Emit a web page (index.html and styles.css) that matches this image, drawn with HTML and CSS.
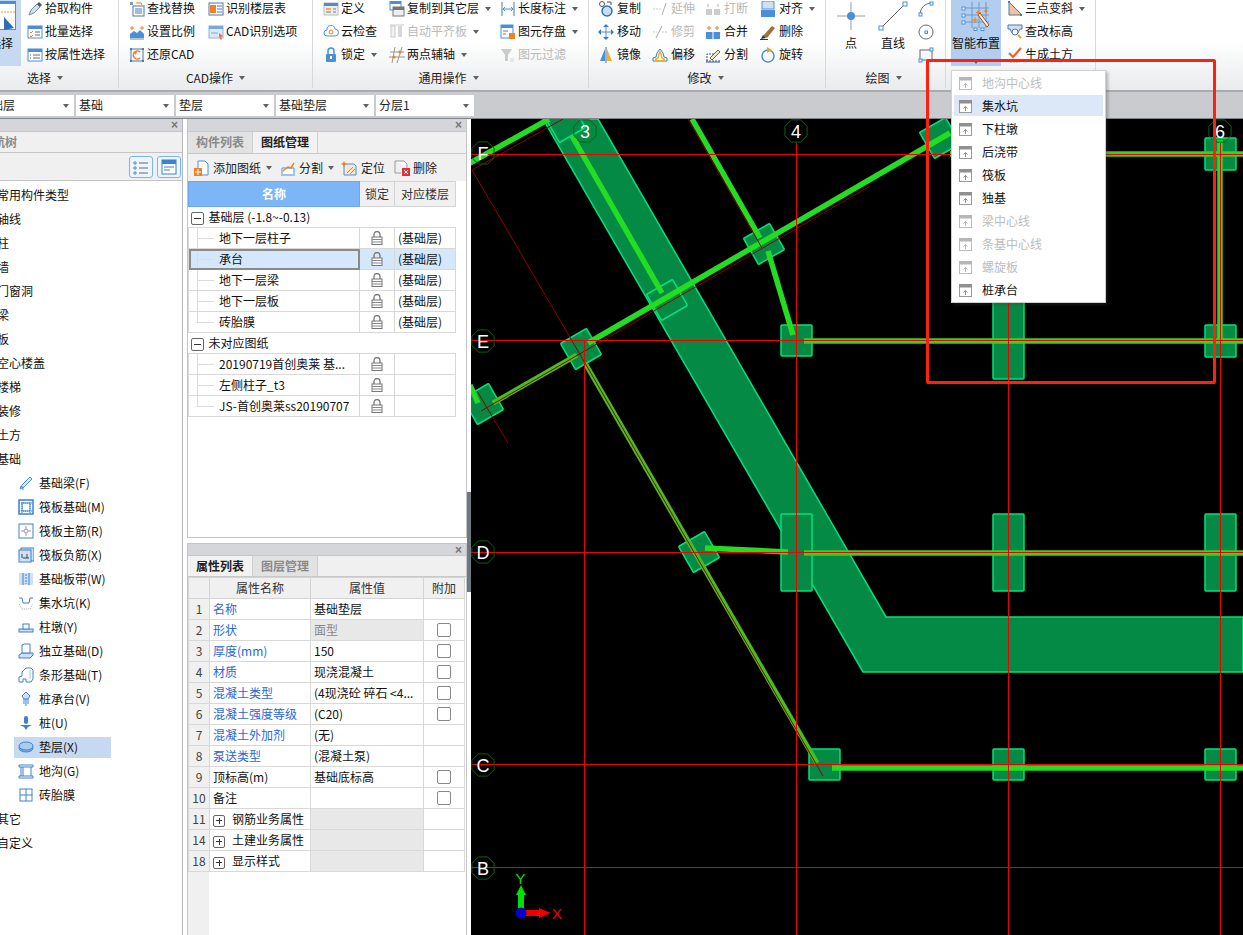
FILE: index.html
```html
<!DOCTYPE html>
<html lang="zh">
<head>
<meta charset="utf-8">
<title>基础垫层</title>
<link rel="stylesheet" href="styles.css">
</head>
<body>
<svg class="defs" width="0" height="0" aria-hidden="true">
<defs>
<symbol id="pick" viewBox="0 0 16 16"><path d="M2 14l2-5 6-6 3 3-6 6z" fill="#cfe0f2" stroke="#7c8da0"/><path d="M10 3l2-2 3 3-2 2z" fill="#555"/></symbol>
<symbol id="batch" viewBox="0 0 16 16"><rect x="1" y="2" width="14" height="12" fill="#fff" stroke="#4a90d9"/><rect x="1" y="2" width="14" height="3" fill="#4a90d9"/><path d="M3 8l1 1 2-2M3 12l1 1 2-2" stroke="#f08020" fill="none"/><path d="M8 8h5M8 11h5" stroke="#667"/></symbol>
<symbol id="attr" viewBox="0 0 16 16"><rect x="1" y="2" width="14" height="12" fill="#fff" stroke="#4a90d9"/><rect x="1" y="2" width="14" height="3" fill="#4a90d9"/><path d="M3 8h1M3 11h1M6 8h7M6 11h7" stroke="#667"/></symbol>
<symbol id="find" viewBox="0 0 16 16"><rect x="4" y="5" width="11" height="10" fill="#fff" stroke="#4a78b0"/><path d="M6 8h7M6 10h7M6 12h7" stroke="#4a78b0"/><path d="M1 1h3v3H1z" fill="#89a"/><path d="M7 2h5l1 2" fill="none" stroke="#f08020"/></symbol>
<symbol id="scale" viewBox="0 0 16 16"><path d="M1 14V10l4-3 3 2 3-3 4 4v4z" fill="#4a90d9"/><path d="M1 4h4M11 4h4" stroke="#f08020"/><path d="M3 2v4M13 2v4" stroke="#f08020"/><path d="M1 15h14" stroke="#789"/></symbol>
<symbol id="restore" viewBox="0 0 16 16"><rect x="2" y="2" width="12" height="12" fill="none" stroke="#4a78b0"/><path d="M1 1h2v2H1zM13 1h2v2h-2zM1 13h2v2H1zM13 13h2v2h-2z" fill="#4a78b0"/><path d="M11 5a4 4 0 1 0 0 6" fill="none" stroke="#f08020" stroke-width="1.5"/><path d="M4 5l4-1-1 4z" fill="#f08020"/></symbol>
<symbol id="floor" viewBox="0 0 16 16"><rect x="1" y="2" width="14" height="12" fill="#fff" stroke="#4a78b0"/><rect x="2" y="4" width="6" height="8" fill="#f08020"/><path d="M9 5h5M9 8h5M9 11h5" stroke="#4a78b0"/></symbol>
<symbol id="cadopt" viewBox="0 0 16 16"><rect x="1" y="2" width="14" height="12" fill="#dbe8f6" stroke="#8db4de"/><rect x="1" y="2" width="14" height="3" fill="#7aa8dc"/><path d="M3 9h7" stroke="#7aa8dc"/><path d="M11 9l4 3-2 1 1 2-1 1-2-3z" fill="#f07050"/></symbol>
<symbol id="def" viewBox="0 0 16 16"><rect x="1" y="2" width="14" height="12" fill="#eee" stroke="#bbb"/><rect x="1" y="2" width="14" height="3" fill="#4a90d9"/><rect x="3" y="7" width="5" height="2" fill="#f0b040"/><path d="M10 8h3M3 11h5M10 11h3" stroke="#777"/></symbol>
<symbol id="cloud" viewBox="0 0 16 16"><path d="M4 12a3 3 0 0 1 0-6 4 4 0 0 1 8-1 3.500 3.500 0 0 1 0 7z" fill="#fff" stroke="#4a90d9"/><circle cx="8" cy="8" r="2" fill="none" stroke="#f08020"/></symbol>
<symbol id="lockb" viewBox="0 0 16 16"><rect x="3" y="7" width="10" height="8" rx="1" fill="#4a90d9"/><path d="M5 7V4a3 3 0 0 1 6 0v3" fill="none" stroke="#4a90d9" stroke-width="1.500"/><rect x="7" y="9" width="2" height="3" fill="#fff"/></symbol>
<symbol id="copylayer" viewBox="0 0 16 16"><rect x="1" y="0" width="11" height="9" fill="#fff" stroke="#4a90d9"/><rect x="1" y="0" width="11" height="3" fill="#4a90d9"/><rect x="4" y="6" width="11" height="9" fill="#eee" stroke="#777"/><rect x="4" y="6" width="11" height="3" fill="#777"/></symbol>
<symbol id="align" viewBox="0 0 16 16"><path d="M1 1h14" stroke="#bbb"/><rect x="2" y="2" width="4" height="11" fill="#eee" stroke="#bbb"/><rect x="9" y="2" width="4" height="11" fill="#ccc"/></symbol>
<symbol id="axis2" viewBox="0 0 16 16"><path d="M0 10h16M1 5h14M6 0L3 16M13 0L8 16" stroke="#999" fill="none"/><circle cx="5" cy="10" r="1.500" fill="#f08020"/><circle cx="11" cy="5" r="1.500" fill="#f08020"/></symbol>
<symbol id="length" viewBox="0 0 16 16"><path d="M2 1v14M14 1v14" stroke="#4a78b0"/><path d="M3 8h10M5 6L3 8l2 2M11 6l2 2-2 2" stroke="#4a90d9" fill="none"/></symbol>
<symbol id="save" viewBox="0 0 16 16"><rect x="1" y="1" width="12" height="13" fill="#fff" stroke="#4a90d9"/><rect x="1" y="1" width="12" height="3" fill="#4a90d9"/><path d="M3 7h5M3 10h3" stroke="#778"/><rect x="9" y="9" width="6" height="6" fill="#f08020"/></symbol>
<symbol id="filter" viewBox="0 0 16 16"><path d="M1 2h11L8 8v6H5V8z" fill="#bbb"/><path d="M10 12h4M10 14h4" stroke="#ccc"/></symbol>
<symbol id="copy" viewBox="0 0 16 16"><circle cx="4" cy="3" r="2.500" fill="none" stroke="#555"/><circle cx="9" cy="10" r="5" fill="#cde" stroke="#2a70c0" stroke-width="1.500"/><path d="M9 1h4v3" fill="none" stroke="#555"/></symbol>
<symbol id="extend" viewBox="0 0 16 16"><path d="M1 8h8" stroke="#bbb" stroke-dasharray="2 1"/><path d="M10 14L14 2" stroke="#999"/></symbol>
<symbol id="break" viewBox="0 0 16 16"><rect x="1" y="8" width="6" height="6" fill="#bbb"/><rect x="9" y="8" width="6" height="6" fill="#bbb"/><path d="M3 3v3M13 3v3" stroke="#ccc" stroke-width="2"/></symbol>
<symbol id="alignr" viewBox="0 0 16 16"><rect x="2" y="0" width="12" height="8" fill="#cfe0f5" stroke="#4a90d9"/><rect x="1" y="9" width="14" height="7" fill="#4a90d9"/></symbol>
<symbol id="move" viewBox="0 0 16 16"><path d="M8 2v12M2 8h12" stroke="#4a90d9"/><path d="M8 0l3 3H5zM8 16l3-3H5zM0 8l3-3v6zM16 8l-3-3v6z" fill="#2a80d0"/></symbol>
<symbol id="trim" viewBox="0 0 16 16"><path d="M1 8h4M10 8h5" stroke="#bbb" stroke-dasharray="2 1"/><path d="M4 14L10 2" stroke="#888"/></symbol>
<symbol id="merge" viewBox="0 0 16 16"><rect x="1" y="8" width="14" height="7" fill="#4a90d9"/><path d="M8 8v7" stroke="#fff"/><path d="M4 2v4M12 2v4M2 4h4M10 4h4" stroke="#f08020" stroke-width="1"/></symbol>
<symbol id="erase" viewBox="0 0 16 16"><path d="M3 12L12 2l3 2-8 10z" fill="#a0703a"/><path d="M1 15l2-4 3 3z" fill="#333"/><path d="M0 15.500h8" stroke="#333"/></symbol>
<symbol id="mirror" viewBox="0 0 16 16"><path d="M7 2v12H2z" fill="#4a90d9"/><path d="M9 2v12h5z" fill="#f0b020"/><path d="M8 0v16" stroke="#667"/></symbol>
<symbol id="offset" viewBox="0 0 16 16"><path d="M1 14v-3l3-1 1-4 3-4 3 4 1 4 3 1v3z" fill="#fff" stroke="#2a80d0"/><path d="M4 14v-2l2-1 1-4 1-2 1 2 1 4 2 1v2z" fill="none" stroke="#f0b020" stroke-width="1.500"/></symbol>
<symbol id="split" viewBox="0 0 16 16"><path d="M1 14h14M2 14L2 7h7" stroke="#3a5a90" fill="none" stroke-dasharray="2 1"/><path d="M5 11l8-8 2 2-8 8z" fill="#f4e8c0" stroke="#665"/><path d="M1 15h14" stroke="#3a5a90"/></symbol>
<symbol id="rotate" viewBox="0 0 16 16"><circle cx="8" cy="9" r="6" fill="none" stroke="#4a90d9" stroke-width="1.500"/><path d="M7 0l5 3-5 3z" fill="#f0a020"/></symbol>
<symbol id="slope" viewBox="0 0 16 16"><path d="M2 1v13h13z" fill="#f4c0a0" stroke="#4a78b0"/><rect x="1" y="0" width="2" height="2" fill="#4a78b0"/><rect x="13" y="13" width="2" height="2" fill="#4a78b0"/></symbol>
<symbol id="elev" viewBox="0 0 16 16"><path d="M1 1h14v4h-2l-2 4H5L3 5H1z" fill="#cfe0f5" stroke="#4a78b0"/><circle cx="8" cy="8" r="3" fill="#fff" stroke="#4a78b0"/><path d="M11 11l3 3" stroke="#f0a020" stroke-width="2"/></symbol>
<symbol id="earth" viewBox="0 0 16 16"><path d="M2 6l4 4 8-9" fill="none" stroke="#f06020" stroke-width="2"/><path d="M2 13h12M3 15h10" stroke="#99a" stroke-dasharray="2 1"/></symbol>
<symbol id="arc" viewBox="0 0 16 16"><path d="M2 14C2 7 7 2 14 2" fill="none" stroke="#667"/><rect x="1" y="12" width="3" height="3" fill="#fff" stroke="#4a90d9"/><rect x="12" y="1" width="3" height="3" fill="#fff" stroke="#4a90d9"/></symbol>
<symbol id="circ" viewBox="0 0 16 16"><circle cx="8" cy="8" r="7" fill="none" stroke="#667"/><rect x="7" y="7" width="2.500" height="2.500" fill="#fff" stroke="#4a90d9"/></symbol>
<symbol id="rectc" viewBox="0 0 16 16"><rect x="2" y="3" width="12" height="10" fill="none" stroke="#667"/><rect x="1" y="12" width="3" height="3" fill="#fff" stroke="#4a90d9"/><rect x="12" y="1" width="3" height="3" fill="#fff" stroke="#4a90d9"/></symbol>
<symbol id="bigpoint" viewBox="0 0 30 30"><path d="M15 1v28M1 15h28" stroke="#9aa0a6"/><circle cx="15" cy="15" r="4" fill="#4a90d9"/></symbol>
<symbol id="bigline" viewBox="0 0 30 30"><path d="M3 27L27 3" stroke="#666"/><rect x="1" y="25" width="4" height="4" fill="#fff" stroke="#4a90d9"/><rect x="25" y="1" width="4" height="4" fill="#fff" stroke="#4a90d9"/></symbol>
<symbol id="smart" viewBox="0 0 30 30"><path d="M4 7h24M4 14h24M4 21h24M11 1v26M18 1v26M25 1v26" stroke="#6a9ad0"/><rect x="1" y="6" width="3" height="3" fill="#fff" stroke="#4a90d9"/><rect x="1" y="13" width="3" height="3" fill="#fff" stroke="#4a90d9"/><rect x="1" y="20" width="3" height="3" fill="#fff" stroke="#4a90d9"/><rect x="13" y="27" width="3" height="2.500" fill="#fff" stroke="#4a90d9"/><rect x="20" y="27" width="3" height="2.500" fill="#fff" stroke="#4a90d9"/><path d="M17 14l9 12 2-2-9-12z" fill="#f4f0e0" stroke="#a05030"/><path d="M11 19h6M14 16v6M17 9v5M15 11.500h5M23 10h4M25 8v4" stroke="#f08020"/></symbol>
<symbol id="tbeam" viewBox="0 0 16 16"><path d="M2 14l2-4 8-8 2 2-8 8zM2 12h3v3" fill="#d6e6f7" stroke="#4a90d9"/></symbol>
<symbol id="traft" viewBox="0 0 16 16"><rect x="1" y="1" width="14" height="14" fill="#fff" stroke="#3a82d0" stroke-width="1.500"/><rect x="4" y="4" width="8" height="8" fill="#fff" stroke="#3a82d0"/><path d="M1 4h14M1 12h14M4 1v14M12 1v14" stroke="#3a82d0" stroke-dasharray="1 1"/></symbol>
<symbol id="tmain" viewBox="0 0 16 16"><rect x="1" y="1" width="14" height="14" fill="#fff" stroke="#3a82d0"/><path d="M3 8h10M8 3v10" stroke="#99a"/><circle cx="8" cy="8" r="2" fill="#fff" stroke="#99a"/></symbol>
<symbol id="tneg" viewBox="0 0 16 16"><rect x="3" y="1" width="13" height="13" fill="#cfe0f5" stroke="#3a82d0"/><rect x="1" y="3" width="12" height="12" fill="#cfe0f5" stroke="#3a82d0"/><path d="M4 7v4M5 11h3M9 7v4M8 11h3" stroke="#345"/></symbol>
<symbol id="tband" viewBox="0 0 16 16"><rect x="1" y="2" width="14" height="12" fill="#cfe0f5"/><path d="M5 2v12M11 2v12" stroke="#3a82d0"/><path d="M8 3v10" stroke="#3a82d0" stroke-dasharray="2 1"/></symbol>
<symbol id="tpit" viewBox="0 0 16 16"><path d="M1 3l3 0 1 5h6l1-5h3" fill="none" stroke="#3a82d0"/><path d="M1 9l3 5h8l3-5" fill="none" stroke="#aaa" stroke-dasharray="1 1"/></symbol>
<symbol id="tpier" viewBox="0 0 16 16"><rect x="1" y="10" width="14" height="3" fill="#cfe0f5" stroke="#3a82d0"/><rect x="5" y="5" width="6" height="5" fill="#fff" stroke="#3a82d0"/></symbol>
<symbol id="tiso" viewBox="0 0 16 16"><path d="M1 12l3-2h11v2l-3 3H1z" fill="#cfe0f5" stroke="#3a82d0"/><path d="M4 10V2l2-1h6v9z" fill="#fff" stroke="#3a82d0"/></symbol>
<symbol id="tstrip" viewBox="0 0 16 16"><path d="M1 15v-5l3-1V5l4-4h5l2 2v9l-2 3H8v-3H5v3z" fill="#fff" stroke="#3a82d0"/><path d="M11 3v8l2 1V3z" fill="#cfe0f5"/></symbol>
<symbol id="tcap" viewBox="0 0 16 16"><path d="M8 1l4 4-2 3h-4L4 5z" fill="#cfe0f5" stroke="#3a82d0"/><path d="M8 8v7M6 8v5M10 8v5" stroke="#3a82d0"/></symbol>
<symbol id="tpile" viewBox="0 0 16 16"><rect x="6" y="1" width="4" height="8" rx="2" fill="#3a82d0"/><path d="M2 10h12l-4 2-2 3-2-3z" fill="#3a82d0"/></symbol>
<symbol id="tcush" viewBox="0 0 16 16"><ellipse cx="8" cy="9" rx="7" ry="4" fill="#7aaee6" stroke="#3a82d0"/><ellipse cx="8" cy="7" rx="7" ry="4" fill="#a9cdf0" stroke="#3a82d0"/></symbol>
<symbol id="tgully" viewBox="0 0 16 16"><path d="M1 2h14v2H1zM1 13h14v2H1z" fill="#fff" stroke="#3a82d0"/><path d="M3 4v9M13 4v9M5 4v9" stroke="#3a82d0"/></symbol>
<symbol id="tbrick" viewBox="0 0 16 16"><rect x="2" y="2" width="12" height="12" fill="#fff" stroke="#3a82d0"/><path d="M8 2v12M2 8h12" stroke="#3a82d0"/></symbol>
<symbol id="tblist" viewBox="0 0 16 16"><path d="M1 3h2v2H1zM1 8h2v2H1zM1 13h2v2H1z" fill="none" stroke="#4a90d9"/><path d="M6 4h9M6 9h9M6 14h9" stroke="#667"/></symbol>
<symbol id="tbwin" viewBox="0 0 16 16"><rect x="1" y="1" width="14" height="14" fill="#fff" stroke="#3a82d0"/><rect x="1" y="1" width="14" height="4" fill="#3a82d0"/><path d="M3 8h10M3 11h6" stroke="#3a82d0"/></symbol>
<symbol id="addpaper" viewBox="0 0 16 16"><path d="M4 1h7l3 3v11H4z" fill="#fff" stroke="#4a90d9"/><rect x="0" y="8" width="8" height="8" fill="#f08020"/><path d="M4 9v6M1 12h6" stroke="#fff"/></symbol>
<symbol id="cutpaper" viewBox="0 0 16 16"><path d="M1 15h14M2 14V8h12v6" fill="#fff" stroke="#4a90d9"/><path d="M3 11l5-4 3 1 3-5" fill="none" stroke="#f08020" stroke-width="1.500"/></symbol>
<symbol id="locate" viewBox="0 0 16 16"><path d="M3 4h10l2 2v9H3z" fill="#fbe5cc" stroke="#4a90d9"/><path d="M3 1l1 2 2 1-2 1-1 2-1-2-2-1 2-1z" fill="#f08020"/><path d="M6 13l6-6M9 14l5-5" stroke="#f08020"/></symbol>
<symbol id="delpaper" viewBox="0 0 16 16"><path d="M1 1h9l3 3v4" fill="#fff" stroke="#999"/><path d="M1 1v12h6" fill="none" stroke="#999"/><rect x="8" y="8" width="8" height="8" fill="#e03030"/><path d="M10 10l4 4M14 10l-4 4" stroke="#fff"/></symbol>
<symbol id="lock" viewBox="0 0 12 14"><path d="M3 6V3.500a3 3 0 0 1 6 0V6" fill="none" stroke="#777" stroke-width="1.300"/><rect x="1" y="6" width="10" height="7.500" fill="#fff" stroke="#777"/><path d="M1 8.500h10M1 11h10" stroke="#888"/></symbol>
<symbol id="menuico" viewBox="0 0 13 13"><rect x="0.500" y="0.500" width="12" height="12" fill="#fff" stroke="#999"/><rect x="0" y="0" width="13" height="3.500" fill="#909090"/><path d="M6.500 11V6.500M4.500 8.500l2-2 2 2" fill="none" stroke="#909090"/></symbol>
<polygon id="oct" points="-4.600,-11.100 4.600,-11.100 11.100,-4.600 11.100,4.600 4.600,11.100 -4.600,11.100 -11.100,4.600 -11.100,-4.600" fill="none" stroke="#0a6410"/>
<rect id="capr" x="-15" y="-15" width="30" height="30" rx="1"/>
</defs>
</svg>

<div class="app">
  <header class="ribbon">
    <section class="group g1">
      <div class="tools">
        <div class="bigbtn selbtn">
          <svg class="bigico" width="30" height="30" viewBox="0 0 30 30"><rect x="0.500" y="0.500" width="29" height="28" fill="#fff" stroke="#4a90d9"/><rect x="0" y="0" width="30" height="3" fill="#4a90d9"/><path d="M0 11h30" stroke="#f0a020" stroke-dasharray="2 1"/><path d="M18 16l10 11-10 2z" fill="#2a70b0"/></svg>
          <span>选择</span>
        </div>
        <div class="col">
          <div class="it"><svg class="ico"><use href="#pick"/></svg><span>拾取构件</span></div>
          <div class="it"><svg class="ico"><use href="#batch"/></svg><span>批量选择</span></div>
          <div class="it"><svg class="ico"><use href="#attr"/></svg><span>按属性选择</span></div>
        </div>
      </div>
      <div class="glabel lb1">选择<i class="caret"></i></div>
    </section>
    <section class="group g2">
      <div class="tools">
        <div class="col w79">
          <div class="it"><svg class="ico"><use href="#find"/></svg><span>查找替换</span></div>
          <div class="it"><svg class="ico"><use href="#scale"/></svg><span>设置比例</span></div>
          <div class="it"><svg class="ico"><use href="#restore"/></svg><span>还原CAD</span></div>
        </div>
        <div class="col">
          <div class="it"><svg class="ico"><use href="#floor"/></svg><span>识别楼层表</span></div>
          <div class="it"><svg class="ico"><use href="#cadopt"/></svg><span>CAD识别选项</span></div>
        </div>
      </div>
      <div class="glabel lb2">CAD操作<i class="caret"></i></div>
    </section>
    <section class="group g3">
      <div class="tools">
        <div class="col w66">
          <div class="it"><svg class="ico"><use href="#def"/></svg><span>定义</span></div>
          <div class="it"><svg class="ico"><use href="#cloud"/></svg><span>云检查</span></div>
          <div class="it"><svg class="ico"><use href="#lockb"/></svg><span>锁定</span><i class="caret"></i></div>
        </div>
        <div class="col w111">
          <div class="it"><svg class="ico"><use href="#copylayer"/></svg><span>复制到其它层</span><i class="caret"></i></div>
          <div class="it off"><svg class="ico"><use href="#align"/></svg><span>自动平齐板</span><i class="caret"></i></div>
          <div class="it"><svg class="ico"><use href="#axis2"/></svg><span>两点辅轴</span><i class="caret"></i></div>
        </div>
        <div class="col">
          <div class="it"><svg class="ico"><use href="#length"/></svg><span>长度标注</span><i class="caret"></i></div>
          <div class="it"><svg class="ico"><use href="#save"/></svg><span>图元存盘</span><i class="caret"></i></div>
          <div class="it off"><svg class="ico"><use href="#filter"/></svg><span>图元过滤</span></div>
        </div>
      </div>
      <div class="glabel lb3">通用操作<i class="caret"></i></div>
    </section>
    <section class="group g4">
      <div class="tools">
        <div class="col w54">
          <div class="it wide"><svg class="ico"><use href="#copy"/></svg><span>复制</span></div>
          <div class="it wide"><svg class="ico"><use href="#move"/></svg><span>移动</span></div>
          <div class="it wide"><svg class="ico"><use href="#mirror"/></svg><span>镜像</span></div>
        </div>
        <div class="col w53">
          <div class="it wide off"><svg class="ico"><use href="#extend"/></svg><span>延伸</span></div>
          <div class="it wide off"><svg class="ico"><use href="#trim"/></svg><span>修剪</span></div>
          <div class="it wide"><svg class="ico"><use href="#offset"/></svg><span>偏移</span></div>
        </div>
        <div class="col w55">
          <div class="it wide off"><svg class="ico"><use href="#break"/></svg><span>打断</span></div>
          <div class="it wide"><svg class="ico"><use href="#merge"/></svg><span>合并</span></div>
          <div class="it wide"><svg class="ico"><use href="#split"/></svg><span>分割</span></div>
        </div>
        <div class="col">
          <div class="it wide"><svg class="ico"><use href="#alignr"/></svg><span>对齐</span><i class="caret"></i></div>
          <div class="it wide"><svg class="ico"><use href="#erase"/></svg><span>删除</span></div>
          <div class="it wide"><svg class="ico"><use href="#rotate"/></svg><span>旋转</span></div>
        </div>
      </div>
      <div class="glabel lb4">修改<i class="caret"></i></div>
    </section>
    <section class="group g5">
      <div class="tools">
        <div class="bigbtn w42"><svg class="bigico"><use href="#bigpoint"/></svg><span>点</span></div>
        <div class="bigbtn w42"><svg class="bigico"><use href="#bigline"/></svg><span>直线</span></div>
        <div class="col shapes">
          <div class="it"><svg class="ico"><use href="#arc"/></svg></div>
          <div class="it"><svg class="ico"><use href="#circ"/></svg></div>
          <div class="it"><svg class="ico"><use href="#rectc"/></svg></div>
        </div>
      </div>
      <div class="glabel lb5">绘图<i class="caret"></i></div>
    </section>
    <section class="group g6">
      <div class="tools">
        <div class="bigbtn smartbtn"><svg class="bigico"><use href="#smart"/></svg><span>智能布置</span><i class="caret"></i></div>
        <div class="col">
          <div class="it"><svg class="ico"><use href="#slope"/></svg><span>三点变斜</span><i class="caret"></i></div>
          <div class="it"><svg class="ico"><use href="#elev"/></svg><span>查改标高</span></div>
          <div class="it"><svg class="ico"><use href="#earth"/></svg><span>生成土方</span></div>
        </div>
      </div>
    </section>
  </header>

  <div class="selbar">
    <div class="sel first"><span>基础层</span><i class="caret"></i></div>
    <div class="sel"><span>基础</span><i class="caret"></i></div>
    <div class="sel"><span>垫层</span><i class="caret"></i></div>
    <div class="sel"><span>基础垫层</span><i class="caret"></i></div>
    <div class="sel"><span>分层1</span><i class="caret"></i></div>
  </div>

  <main class="main">
    <aside class="nav">
      <div class="strip"><b class="close">×</b></div>
      <div class="navtab"><span>导航树</span></div>
      <div class="navtool">
        <span class="tbtn"><svg class="ico"><use href="#tblist"/></svg></span>
        <span class="tbtn"><svg class="ico"><use href="#tbwin"/></svg></span>
      </div>
      <ul class="tree">
        <li class="top"><span>常用构件类型</span></li>
        <li class="top"><span>轴线</span></li>
        <li class="top"><span>柱</span></li>
        <li class="top"><span>墙</span></li>
        <li class="top"><span>门窗洞</span></li>
        <li class="top"><span>梁</span></li>
        <li class="top"><span>板</span></li>
        <li class="top"><span>空心楼盖</span></li>
        <li class="top"><span>楼梯</span></li>
        <li class="top"><span>装修</span></li>
        <li class="top"><span>土方</span></li>
        <li class="top"><span>基础</span></li>
        <li class="kid"><svg class="ico"><use href="#tbeam"/></svg><span>基础梁(F)</span></li>
        <li class="kid"><svg class="ico"><use href="#traft"/></svg><span>筏板基础(M)</span></li>
        <li class="kid"><svg class="ico"><use href="#tmain"/></svg><span>筏板主筋(R)</span></li>
        <li class="kid"><svg class="ico"><use href="#tneg"/></svg><span>筏板负筋(X)</span></li>
        <li class="kid"><svg class="ico"><use href="#tband"/></svg><span>基础板带(W)</span></li>
        <li class="kid"><svg class="ico"><use href="#tpit"/></svg><span>集水坑(K)</span></li>
        <li class="kid"><svg class="ico"><use href="#tpier"/></svg><span>柱墩(Y)</span></li>
        <li class="kid"><svg class="ico"><use href="#tiso"/></svg><span>独立基础(D)</span></li>
        <li class="kid"><svg class="ico"><use href="#tstrip"/></svg><span>条形基础(T)</span></li>
        <li class="kid"><svg class="ico"><use href="#tcap"/></svg><span>桩承台(V)</span></li>
        <li class="kid"><svg class="ico"><use href="#tpile"/></svg><span>桩(U)</span></li>
        <li class="kid cur"><svg class="ico"><use href="#tcush"/></svg><span>垫层(X)</span></li>
        <li class="kid"><svg class="ico"><use href="#tgully"/></svg><span>地沟(G)</span></li>
        <li class="kid"><svg class="ico"><use href="#tbrick"/></svg><span>砖胎膜</span></li>
        <li class="top"><span>其它</span></li>
        <li class="top"><span>自定义</span></li>
      </ul>
    </aside>

    <div class="midcol">
      <section class="panel ptop">
        <div class="strip"><b class="close">×</b></div>
        <div class="tabs"><span class="tab">构件列表</span><span class="tab on">图纸管理</span></div>
        <div class="ptool">
          <div class="pt p1"><svg class="ico"><use href="#addpaper"/></svg><span>添加图纸</span><i class="caret"></i></div>
          <div class="pt p2"><svg class="ico"><use href="#cutpaper"/></svg><span>分割</span><i class="caret"></i></div>
          <div class="pt p3"><svg class="ico"><use href="#locate"/></svg><span>定位</span></div>
          <div class="pt p4"><svg class="ico"><use href="#delpaper"/></svg><span>删除</span></div>
        </div>
        <table class="tbl paper">
          <colgroup><col class="c1"><col class="c2"><col class="c3"></colgroup>
          <thead><tr><th class="hblue">名称</th><th>锁定</th><th>对应楼层</th></tr></thead>
          <tbody>
            <tr class="grp"><td colspan="3"><i class="exp"></i>基础层 (-1.8~-0.13)</td></tr>
            <tr><td class="leaf">地下一层柱子</td><td class="lk"><svg class="lock"><use href="#lock"/></svg></td><td>(基础层)</td></tr>
            <tr class="active"><td class="leaf">承台</td><td class="lk"><svg class="lock"><use href="#lock"/></svg></td><td>(基础层)</td></tr>
            <tr><td class="leaf">地下一层梁</td><td class="lk"><svg class="lock"><use href="#lock"/></svg></td><td>(基础层)</td></tr>
            <tr><td class="leaf">地下一层板</td><td class="lk"><svg class="lock"><use href="#lock"/></svg></td><td>(基础层)</td></tr>
            <tr><td class="leaf end">砖胎膜</td><td class="lk"><svg class="lock"><use href="#lock"/></svg></td><td>(基础层)</td></tr>
            <tr class="grp"><td colspan="3"><i class="exp"></i>未对应图纸</td></tr>
            <tr><td class="leaf">20190719首创奥莱 基...</td><td class="lk"><svg class="lock"><use href="#lock"/></svg></td><td></td></tr>
            <tr><td class="leaf">左侧柱子_t3</td><td class="lk"><svg class="lock"><use href="#lock"/></svg></td><td></td></tr>
            <tr><td class="leaf end">JS-首创奥莱ss20190707</td><td class="lk"><svg class="lock"><use href="#lock"/></svg></td><td></td></tr>
          </tbody>
        </table>
      </section>
      <section class="panel pbot">
        <div class="strip"><b class="close">×</b></div>
        <div class="tabs"><span class="tab on">属性列表</span><span class="tab">图层管理</span></div>
        <table class="tbl props">
          <colgroup><col class="n"><col class="k"><col class="v"><col class="a"></colgroup>
          <thead><tr><th></th><th>属性名称</th><th>属性值</th><th>附加</th></tr></thead>
          <tbody>
            <tr><td class="num">1</td><td class="blue">名称</td><td>基础垫层</td><td></td></tr>
            <tr><td class="num">2</td><td class="blue">形状</td><td class="gray">面型</td><td class="ck"><i class="chk"></i></td></tr>
            <tr><td class="num">3</td><td class="blue">厚度(mm)</td><td>150</td><td class="ck"><i class="chk"></i></td></tr>
            <tr><td class="num">4</td><td class="blue">材质</td><td>现浇混凝土</td><td class="ck"><i class="chk"></i></td></tr>
            <tr><td class="num">5</td><td class="blue">混凝土类型</td><td>(4现浇砼 碎石 &lt;4...</td><td class="ck"><i class="chk"></i></td></tr>
            <tr><td class="num">6</td><td class="blue">混凝土强度等级</td><td>(C20)</td><td class="ck"><i class="chk"></i></td></tr>
            <tr><td class="num">7</td><td class="blue">混凝土外加剂</td><td>(无)</td><td></td></tr>
            <tr><td class="num">8</td><td class="blue">泵送类型</td><td>(混凝土泵)</td><td></td></tr>
            <tr><td class="num">9</td><td>顶标高(m)</td><td>基础底标高</td><td class="ck"><i class="chk"></i></td></tr>
            <tr><td class="num">10</td><td>备注</td><td></td><td class="ck"><i class="chk"></i></td></tr>
            <tr><td class="num">11</td><td><i class="exp plus"></i>钢筋业务属性</td><td class="shade"></td><td></td></tr>
            <tr><td class="num">14</td><td><i class="exp plus"></i>土建业务属性</td><td class="shade"></td><td></td></tr>
            <tr><td class="num">18</td><td><i class="exp plus"></i>显示样式</td><td class="shade"></td><td></td></tr>
          </tbody>
        </table>
      </section>
    </div>

    <div class="splitter"><div class="grip"></div></div>

    <div class="canvas">
      <svg class="cad" width="772" height="816" viewBox="471 119 772 816">
        <g class="cap">
          <polygon points="543,119 598,119 886,617 1243,617 1243,672 863,672"/>
          <use href="#capr" transform="translate(581 349) rotate(-30)"/>
          <use href="#capr" transform="translate(764 244) rotate(-30)"/>
          <use href="#capr" transform="translate(667 300) rotate(-30)"/>
          <use href="#capr" transform="translate(483 404) rotate(-30)"/>
          <use href="#capr" transform="translate(565 122) rotate(-30)"/>
          <use href="#capr" transform="translate(940 138) rotate(-30)"/>
          <use href="#capr" transform="translate(699 552) rotate(-30)"/>
          <rect x="781" y="325" width="31" height="31" rx="1"/>
          <rect x="781" y="514" width="31" height="77" rx="1"/>
          <rect x="993" y="302" width="31" height="77" rx="1"/>
          <rect x="993" y="514" width="31" height="77" rx="1"/>
          <rect x="1205" y="138" width="31" height="32" rx="1"/>
          <rect x="1205" y="325" width="31" height="32" rx="1"/>
          <rect x="1205" y="514" width="31" height="77" rx="1"/>
          <rect x="809" y="749" width="31" height="31" rx="1"/>
          <rect x="993" y="749" width="31" height="31" rx="1"/>
          <rect x="1205" y="749" width="31" height="31" rx="1"/>
        </g>
        <g class="beam">
          <path d="M470 163L549 119"/>
          <path d="M572 136L662 293"/>
          <path d="M692 119L760 238"/>
          <path d="M768 251L793 335"/>
          <path d="M950 133L588 343"/>
          <path d="M470 385L478 403"/>
          <path d="M705 548L788 552"/>
          <path d="M804 341H1243"/>
          <path d="M804 553H1243"/>
          <path d="M832 768H1243"/>
          <path d="M950 154H1243"/>
          <path d="M1220 140V340"/>
        </g>
        <g class="olive">
          <path d="M577 355L493 403"/>
          <path d="M585 363L817 763"/>
        </g>
        <g class="darkred">
          <path d="M472 170L563 119"/>
          <path d="M472 170L585 363L823 776"/>
          <path d="M688 119L762 248"/>
          <path d="M481 411L870 186"/>
          <path d="M477 391L508 443"/>
        </g>
        <g class="redline">
          <path d="M471 154.500H1243"/>
          <path d="M471 340.500H1243"/>
          <path d="M471 552.500H1243"/>
          <path d="M471 764.500H1243"/>
          <path d="M471 867.500H1243"/>
          <path d="M584.500 341V935"/>
          <path d="M796.500 143V935"/>
          <path d="M1008.500 143V935"/>
          <path d="M1220.500 143V935"/>
        </g>
        <g>
          <use href="#oct" x="483" y="153"/><use href="#oct" x="483" y="341"/><use href="#oct" x="483" y="552"/><use href="#oct" x="483" y="765"/><use href="#oct" x="483" y="868"/>
          <use href="#oct" x="585" y="131"/><use href="#oct" x="796" y="131"/><use href="#oct" x="1220" y="131"/>
        </g>
        <g class="axl">
          <text x="483" y="160">F</text><text x="483" y="348">E</text><text x="483" y="559">D</text><text x="483" y="772">C</text><text x="483" y="875">B</text>
          <text x="585" y="138">3</text><text x="796" y="138">4</text><text x="1220" y="138">6</text>
        </g>
        <g>
          <rect x="518" y="895" width="6" height="18" fill="#00e000"/>
          <path d="M521 885l5 10h-10z" fill="#00e000"/>
          <rect x="521" y="910" width="18" height="6" fill="#f00000"/>
          <path d="M551 913l-12-5v10z" fill="#f00000"/>
          <circle cx="521" cy="913" r="5.500" fill="#0000c8"/>
          <text class="cy" x="520.500" y="884">Y</text>
          <text class="cx" x="557" y="919">X</text>
        </g>
      </svg>
    </div>
  </main>

  <div class="menu">
    <div class="mi off"><svg class="mico"><use href="#menuico"/></svg><span>地沟中心线</span></div>
    <div class="mi hot"><svg class="mico"><use href="#menuico"/></svg><span>集水坑</span></div>
    <div class="mi"><svg class="mico"><use href="#menuico"/></svg><span>下柱墩</span></div>
    <div class="mi"><svg class="mico"><use href="#menuico"/></svg><span>后浇带</span></div>
    <div class="mi"><svg class="mico"><use href="#menuico"/></svg><span>筏板</span></div>
    <div class="mi"><svg class="mico"><use href="#menuico"/></svg><span>独基</span></div>
    <div class="mi off"><svg class="mico"><use href="#menuico"/></svg><span>梁中心线</span></div>
    <div class="mi off"><svg class="mico"><use href="#menuico"/></svg><span>条基中心线</span></div>
    <div class="mi off"><svg class="mico"><use href="#menuico"/></svg><span>螺旋板</span></div>
    <div class="mi"><svg class="mico"><use href="#menuico"/></svg><span>桩承台</span></div>
  </div>
  <div class="mark"></div>
</div>
</body>
</html>
```
FILE: styles.css
```css
* { box-sizing: border-box; }
html, body { margin: 0; padding: 0; }
body {
  font: 12px/1.2 "Noto Sans CJK SC", "Liberation Sans", sans-serif;
  color: #222;
  background: #fff;
}
.defs { position: absolute; }
.app {
  position: relative;
  width: 1243px;
  height: 935px;
  overflow: hidden;
  display: flex;
  flex-direction: column;
}

/* ribbon */
.ribbon {
  height: 92px;
  flex: none;
  display: flex;
  overflow: hidden;
  background: linear-gradient(#fff 0, #fff 45%, #e9ebed 100%);
  border-bottom: 2px solid #a9acaf;
}
.group {
  flex: none;
  display: flex;
  flex-direction: column;
  height: 88px;
  border-right: 1px solid #d6d8da;
}
.g1 { width: 119px; }
.g2 { width: 194px; padding-left: 10px; }
.g3 { width: 276px; padding-left: 10px; }
.g4 { width: 237px; padding-left: 9px; }
.g5 { width: 120px; padding-left: 4px; }
.g6 { width: 150px; padding-left: 5px; }
.tools {
  display: flex;
  height: 69px;
  margin-top: -3px;
  flex: none;
}
.col { display: grid; grid-auto-rows: 23px; flex: none; }
.w42 { width: 42px; }
.w53 { width: 53px; }
.w54 { width: 54px; }
.w55 { width: 55px; }
.w66 { width: 66px; }
.w79 { width: 79px; }
.w111 { width: 111px; }
.it { display: flex; align-items: center; white-space: nowrap; color: #111; }
.ico { width: 16px; height: 16px; flex: none; margin-right: 2px; }
.it.wide .ico { margin-right: 3px; }
.off { color: #b9b9b9; }
.off .ico { opacity: .75; }
.caret {
  display: inline-block;
  width: 0;
  height: 0;
  margin-left: 6px;
  border-left: 3.5px solid transparent;
  border-right: 3.5px solid transparent;
  border-top: 4px solid #606060;
  flex: none;
}
.bigbtn {
  display: flex;
  flex-direction: column;
  align-items: center;
  flex: none;
  color: #111;
}
.bigico { width: 30px; height: 30px; margin-top: 4px; margin-bottom: 3px; flex: none; }
.bigbtn span { line-height: 18px; white-space: nowrap; }
.selbtn {
  width: 40px;
  margin-left: -19px;
  margin-right: 6px;
  height: 69px;
  background: #c6d9f0;
}
.smartbtn {
  width: 50px;
  height: 69px;
  margin-right: 6px;
  background: #b2cdee;
}
.smartbtn .caret { margin: 8px 0 0; }
.shapes { margin-left: 4px; }
.glabel {
  height: 24px;
  display: flex;
  align-items: center;
  justify-content: center;
  color: #222;
  flex: none;
}
.lb1 { width: 90px; }
.lb2 { margin-left: -10px; }
.lb3 { margin-left: -4px; padding-right: 10px; }
.lb4 { margin-left: -12px; }
.lb5 { margin-left: -8px; }

/* selectors */
.selbar {
  height: 26px;
  flex: none;
  display: flex;
  gap: 2px;
  padding-top: 3px;
  background: #c9cbce;
}
.sel {
  width: 98px;
  height: 21px;
  flex: none;
  display: flex;
  align-items: center;
  justify-content: space-between;
  padding: 0 5px 0 3px;
  background: #fff;
  color: #222;
}
.sel.first { margin-left: -24px; }

/* main */
.main {
  flex: 1;
  min-height: 0;
  display: flex;
  border-top: 1px solid #80858a;
  background: #fff;
}
.nav {
  width: 183px;
  flex: none;
  border-right: 1px solid #b4b6b9;
  margin-right: 4px;
  display: flex;
  flex-direction: column;
  overflow: hidden;
}
.strip {
  height: 12px;
  flex: none;
  display: flex;
  justify-content: flex-end;
  align-items: center;
  padding-right: 4px;
  background: #d4d6da;
}
.close { color: #777; font: bold 12px/12px "Liberation Sans", sans-serif; }
.navtab {
  height: 22px;
  flex: none;
  display: flex;
  align-items: center;
  background: #f0f0f0;
  border-top: 1px solid #c8c8c8;
  border-bottom: 1px solid #c4c4c4;
  color: #8a8a8a;
  font-weight: bold;
}
.navtab span { margin-left: -19px; }
.navtool {
  height: 28px;
  flex: none;
  display: flex;
  justify-content: flex-end;
  align-items: center;
  gap: 4px;
  padding-right: 1px;
  background: #f0f0f0;
  border-bottom: 1px solid #c4c4c4;
}
.tbtn {
  width: 24px;
  height: 22px;
  display: flex;
  align-items: center;
  justify-content: center;
  border: 1px solid #7ab4f0;
  border-radius: 3px;
  background: #eef5fd;
}
.tbtn .ico { margin: 0; }
.tree { list-style: none; margin: 0; padding: 2px 0 0; }
.tree li { height: 24px; display: flex; align-items: center; white-space: nowrap; color: #111; }
.top span { margin-left: -3px; }
.kid { padding-left: 18px; }
.kid .ico { margin-right: 5px; }
.kid.cur { background: linear-gradient(#c6d9f0, #c6d9f0) 14px 2px / 97px 21px no-repeat; }

/* middle panels */
.midcol {
  width: 280px;
  flex: none;
  display: flex;
  flex-direction: column;
  gap: 5px;
}
.panel {
  border-left: 1px solid #c4c4c4;
  border-right: 1px solid #c4c4c4;
  overflow: hidden;
  background: #fff;
}
.ptop { height: 419px; flex: none; border-bottom: 1px solid #c4c4c4; }
.pbot {
  flex: 1;
  min-height: 0;
  border-top: 1px solid #c4c4c4;
  background: linear-gradient(#f0f0f0, #f0f0f0) 0 0 / 21px 100% no-repeat, #fff;
}
.pbot .strip { height: 11px; }
.pbot .tabs { height: 22px; }
.tabs {
  height: 23px;
  display: flex;
  background: #f0f0f0;
  border-top: 1px solid #c8c8c8;
  border-bottom: 1px solid #c8c8c8;
}
.tab {
  width: 65px;
  display: flex;
  align-items: center;
  justify-content: center;
  font-weight: bold;
  color: #8a8a8a;
  background: #e2e2e2;
  border-right: 1px solid #cfcfcf;
}
.tab.on { color: #222; background: #f2f2f2; }
.ptool {
  height: 27px;
  display: flex;
  align-items: center;
  background: #f0f0f0;
  padding: 1px 0 0 6px;
}
.pt { display: flex; align-items: center; color: #222; }
.pt .ico { margin-right: 3px; }
.p1 { width: 86px; }
.p2 { width: 61px; }
.p3 { width: 53px; }
.pt.p3 .ico { margin-right: 4px; }
.p1 .caret, .p2 .caret { margin-left: 5px; }
.tbl { border-collapse: collapse; table-layout: fixed; background: #fff; }
.tbl th {
  font-weight: normal;
  color: #333;
  background: #f0f0f0;
  border: 1px solid #d4d4d4;
  padding: 0;
}
.tbl td {
  height: 21px;
  padding: 0;
  border: 1px solid #d8d8d8;
  white-space: nowrap;
  overflow: hidden;
  color: #111;
}
.paper { width: 267px; }
.paper th { height: 25px; }
.paper .c1 { width: 171px; }
.paper .c2 { width: 35px; }
.paper .c3 { width: 61px; }
.paper td { padding-left: 3px; }
.paper .hblue { background: #7cb6f7; color: #fff; font-weight: bold; border-color: #6aa8ee; }
.paper .grp td { padding-left: 2px; border-left: 0; border-right: 0; }
.paper td.leaf {
  padding-left: 30px;
  background:
    linear-gradient(#dcdcdc, #dcdcdc) 8px 0 / 1px 100% no-repeat,
    linear-gradient(#dcdcdc, #dcdcdc) 8px 50% / 17px 1px no-repeat;
}
.paper td.leaf.end {
  background:
    linear-gradient(#dcdcdc, #dcdcdc) 8px 0 / 1px 50% no-repeat,
    linear-gradient(#dcdcdc, #dcdcdc) 8px 50% / 17px 1px no-repeat;
}
.paper .active td { background-color: #d5e8fb; }
.paper .active td.leaf { outline: 2px solid #8a8a8a; outline-offset: -2px; }
.paper td.lk { padding: 0; text-align: center; }
.lock { width: 12px; height: 14px; display: block; margin: 0 auto; }
.exp {
  display: inline-block;
  width: 13px;
  height: 13px;
  margin-right: 5px;
  vertical-align: -3px;
  border: 1px solid #666;
  border-radius: 2px;
  background: linear-gradient(#333, #333) center / 7px 1px no-repeat;
}
.exp.plus {
  width: 12px;
  height: 12px;
  margin: 0 7px 0 0;
  background:
    linear-gradient(#333, #333) center / 6px 1px no-repeat,
    linear-gradient(#333, #333) center / 1px 6px no-repeat;
}
.props { width: 276px; }
.props th { height: 21px; }
.props .n { width: 21px; }
.props .k { width: 101px; }
.props .v { width: 113px; }
.props .a { width: 41px; }
.props td { padding-left: 3px; }
.props td.num { padding: 0; background: #f0f0f0; text-align: center; color: #444; }
.props td.blue { color: #2a66d8; }
.props td.gray { background: #e8e8e8; color: #888; }
.props td.shade { background: #e8e8e8; }
.props td.ck { padding: 0; text-align: center; }
.chk {
  display: block;
  width: 14px;
  height: 14px;
  margin: 0 auto;
  border: 1px solid #888;
  border-radius: 2px;
  background: #fff;
}

/* splitter and canvas */
.splitter { width: 4px; flex: none; padding-top: 373px; }
.grip { height: 100px; background: #6f7780; }
.canvas { width: 772px; flex: none; background: #000; overflow: hidden; }
.cad { display: block; }
.cap use, .cap rect, .cap polygon { fill: #048a44; stroke: #00e27a; stroke-width: 1.5; }
.beam path { stroke: #22dd22; stroke-width: 5.5; fill: none; }
.olive path { stroke: #44c020; stroke-width: 5; fill: none; }
.darkred path { stroke: #900000; stroke-width: 1; fill: none; }
.redline path { stroke: #f00000; stroke-width: 1; fill: none; }
.axl text { fill: #fff; font: 18px "Liberation Sans", sans-serif; text-anchor: middle; }
.cy { fill: #00e000; font: 15px "Liberation Sans", sans-serif; text-anchor: middle; }
.cx { fill: #f00000; font: 15px "Liberation Sans", sans-serif; text-anchor: middle; }

/* overlays */
.menu {
  position: absolute;
  left: 951px;
  top: 70px;
  width: 155px;
  height: 233px;
  padding: 1px 2px;
  background: #fff;
  border: 1px solid #d0d0d0;
  box-shadow: 2px 2px 3px rgba(60, 60, 60, .35);
}
.mi { height: 23px; display: flex; align-items: center; color: #111; }
.mi.off { color: #bcbcbc; }
.mi.off .mico { opacity: .65; }
.mi.hot { background: linear-gradient(#dce8f8, #dce8f8) 0 0 / 100% 21px no-repeat; }
.mico { width: 13px; height: 13px; margin: 0 10px 0 5px; flex: none; }
.mark {
  position: absolute;
  left: 926px;
  top: 59px;
  width: 290px;
  height: 325px;
  border: 3px solid #ff2010;
  border-radius: 2px;
}
```
